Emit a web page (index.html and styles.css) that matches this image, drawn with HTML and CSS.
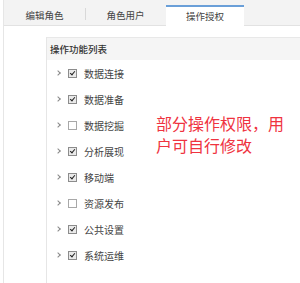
FILE: index.html
```html
<!DOCTYPE html>
<html lang="zh-CN">
<head>
    <meta charset="UTF-8">
    <title>操作授权</title>
    <link rel="stylesheet" href="styles.css">
</head>
<body>

<div class="page">
    <div class="tabbar">
        <div class="tab">编辑角色</div>
        <div class="tab">角色用户</div>
        <div class="tab active">操作授权</div>
    </div>

    <div class="content">
        <div class="panel">
            <div class="panel-head">操作功能列表</div>
            <div class="panel-body">
                <ul class="tree">
                    <li class="row"><span class="arrow"></span><span class="check on"></span><span>数据连接</span></li>
                    <li class="row"><span class="arrow"></span><span class="check on"></span><span>数据准备</span></li>
                    <li class="row"><span class="arrow"></span><span class="check"></span><span>数据挖掘</span></li>
                    <li class="row"><span class="arrow"></span><span class="check on"></span><span>分析展现</span></li>
                    <li class="row"><span class="arrow"></span><span class="check on"></span><span>移动端</span></li>
                    <li class="row"><span class="arrow"></span><span class="check"></span><span>资源发布</span></li>
                    <li class="row"><span class="arrow"></span><span class="check on"></span><span>公共设置</span></li>
                    <li class="row"><span class="arrow"></span><span class="check on"></span><span>系统运维</span></li>
                </ul>
                <p class="note">部分操作权限，用<br>户可自行修改</p>
            </div>
        </div>
    </div>
</div>

</body>
</html>
```

FILE: styles.css
```css
body {
    margin: 0;
    background-color: #fff;
    font-family: "Noto Sans CJK SC", "Noto Sans", sans-serif;
    color: #333;
}

.page {
    margin-left: 3px;
    border-left: 1px solid #e6e6e6;
    height: 283px;
    overflow: hidden;
}

.tabbar {
    display: flex;
    align-items: flex-end;
    height: 25px;
    background-color: #f3f3f3;
    border-bottom: 1px solid #e2e2e2;
}

.tab {
    position: relative;
    width: 81px;
    height: 20px;
    line-height: 20px;
    text-align: center;
    font-size: 9.5px;
    color: #444;
}

.tab + .tab::before {
    content: "";
    position: absolute;
    left: 0;
    top: 3px;
    height: 12px;
    border-left: 1px solid #d8d8d8;
}

.tab.active {
    width: 78px;
    height: 19px;
    margin-bottom: -1px;
    background-color: #fff;
    border-top: 2px solid #6a9fd8;
    line-height: 19px;
}

.tab.active::before {
    display: none;
}

.content {
    padding: 11px 0 0 42px;
}

.panel {
    border-left: 1px solid #e6e6e6;
    height: 260px;
}

.panel-head {
    height: 22px;
    line-height: 22px;
    padding-left: 3px;
    background-color: #f5f5f5;
    border-top: 1px solid #e8e8e8;
    font-size: 9.5px;
    font-weight: 500;
    color: #333;
}

.panel-body {
    display: flex;
}

.tree {
    list-style: none;
    margin: 0;
    padding: 0 0 0 9px;
    width: 100px;
}

.row {
    display: flex;
    align-items: center;
    height: 26px;
    font-size: 10px;
    color: #444;
    white-space: nowrap;
}

.arrow {
    width: 3px;
    height: 3px;
    border-top: 1px solid #888;
    border-right: 1px solid #888;
    transform: rotate(45deg);
    margin-right: 8px;
}

.check {
    box-sizing: border-box;
    width: 9px;
    height: 9px;
    border: 1px solid #a8a8a8;
    background-color: #fff;
    margin-right: 7px;
    position: relative;
}

.check.on {
    background-color: #eaeaea;
    border-color: #8c8c8c;
}

.check.on::after {
    content: "";
    position: absolute;
    left: 2px;
    top: 0;
    width: 2px;
    height: 4px;
    border-right: 1.5px solid #222;
    border-bottom: 1.5px solid #222;
    transform: rotate(40deg);
}

.note {
    margin: 52px 0 0 0;
    font-size: 16px;
    line-height: 22px;
    color: #ef3340;
}
```
